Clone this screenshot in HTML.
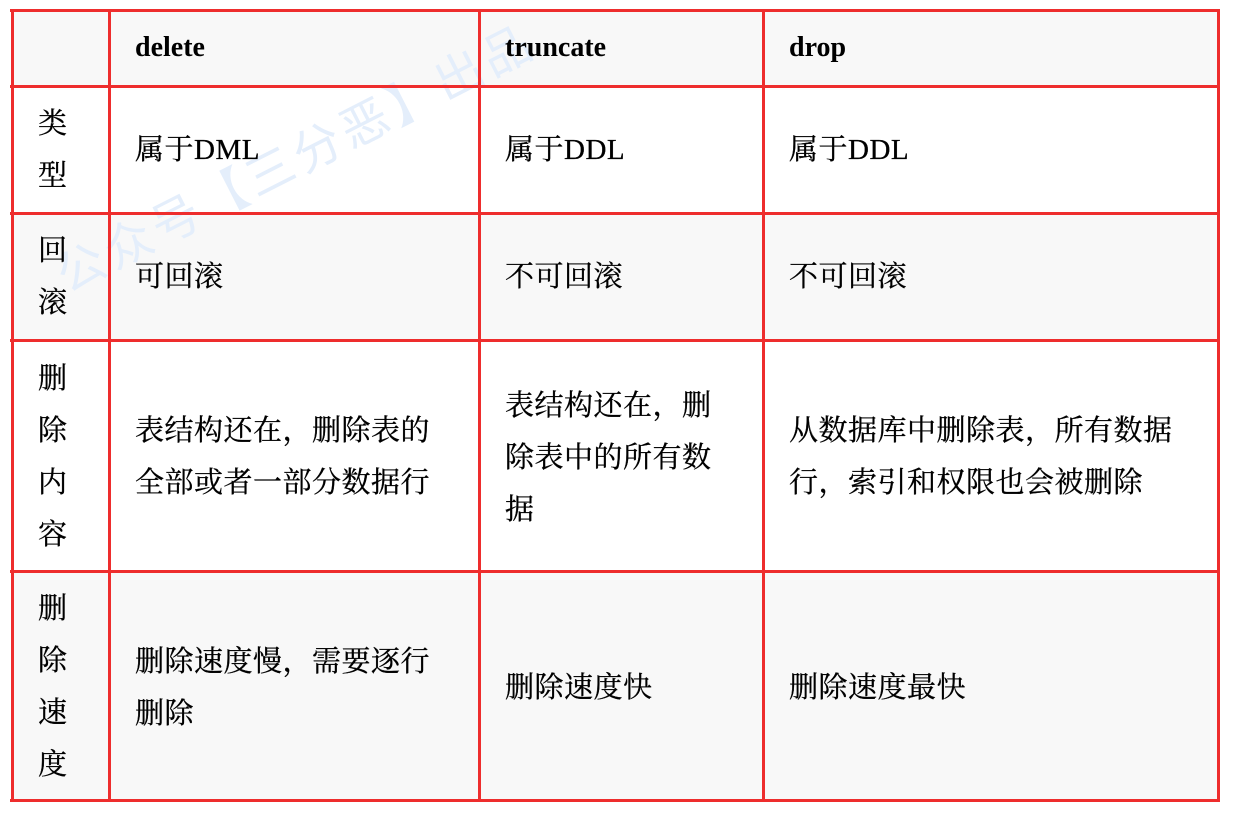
<!DOCTYPE html>
<html><head><meta charset="utf-8"><style>
html,body{margin:0;padding:0;background:#fff;width:1233px;height:818px;overflow:hidden;position:relative}
.bg{position:absolute;left:11px;width:1208px}
.v{position:absolute;background:#ee2d2d;width:2.5px}
.h{position:absolute;background:#ee2d2d;height:2.5px;left:10px;width:1210px}
.t{position:absolute;font-family:"Liberation Serif","Noto Serif CJK SC",serif;font-size:29px;line-height:52px;color:#000;white-space:nowrap;letter-spacing:0.5px;-webkit-text-stroke:0.3px #000}
.b{font-weight:bold;font-size:28px;letter-spacing:0;-webkit-text-stroke:0}
.wm{position:absolute;font-family:"Liberation Sans","Noto Sans CJK SC",sans-serif;font-size:48px;color:#e4eefb;transform:rotate(-27deg);transform-origin:left center;white-space:nowrap;letter-spacing:5px}
</style></head><body>
<div class="bg" style="top:10px;height:76px;background:#f8f8f8"></div>
<div class="bg" style="top:213px;height:127px;background:#f8f8f8"></div>
<div class="bg" style="top:571px;height:230px;background:#f8f8f8"></div>
<div class="wm" style="top:240px;left:58px">公众号【三分恶】出品</div>
<div class="h" style="top:9px"></div>
<div class="h" style="top:85px"></div>
<div class="h" style="top:212px"></div>
<div class="h" style="top:339px"></div>
<div class="h" style="top:570px"></div>
<div class="h" style="top:799px;height:3px"></div>
<div class="v" style="left:11px;top:9px;height:793px"></div>
<div class="v" style="left:108px;top:9px;height:793px"></div>
<div class="v" style="left:478px;top:9px;height:793px"></div>
<div class="v" style="left:762px;top:9px;height:793px"></div>
<div class="v" style="left:1217px;top:9px;height:793px"></div>

<div class="t b" style="left:135px;top:22px">delete</div>
<div class="t b" style="left:505px;top:22px">truncate</div>
<div class="t b" style="left:789px;top:22px">drop</div>

<div class="t" style="left:38px;top:98px">类<br>型</div>
<div class="t" style="left:135px;top:124px">属于DML</div>
<div class="t" style="left:505px;top:124px">属于DDL</div>
<div class="t" style="left:789px;top:124px">属于DDL</div>

<div class="t" style="left:38px;top:225px">回<br>滚</div>
<div class="t" style="left:135px;top:251px">可回滚</div>
<div class="t" style="left:505px;top:251px">不可回滚</div>
<div class="t" style="left:789px;top:251px">不可回滚</div>

<div class="t" style="left:38px;top:353px">删<br>除<br>内<br>容</div>
<div class="t" style="left:135px;top:405px">表结构还在，删除表的<br>全部或者一部分数据行</div>
<div class="t" style="left:505px;top:380px">表结构还在，删<br>除表中的所有数<br>据</div>
<div class="t" style="left:789px;top:405px">从数据库中删除表，所有数据<br>行，索引和权限也会被删除</div>

<div class="t" style="left:38px;top:583px">删<br>除<br>速<br>度</div>
<div class="t" style="left:135px;top:636px">删除速度慢，需要逐行<br>删除</div>
<div class="t" style="left:505px;top:662px">删除速度快</div>
<div class="t" style="left:789px;top:662px">删除速度最快</div>
</body></html>
